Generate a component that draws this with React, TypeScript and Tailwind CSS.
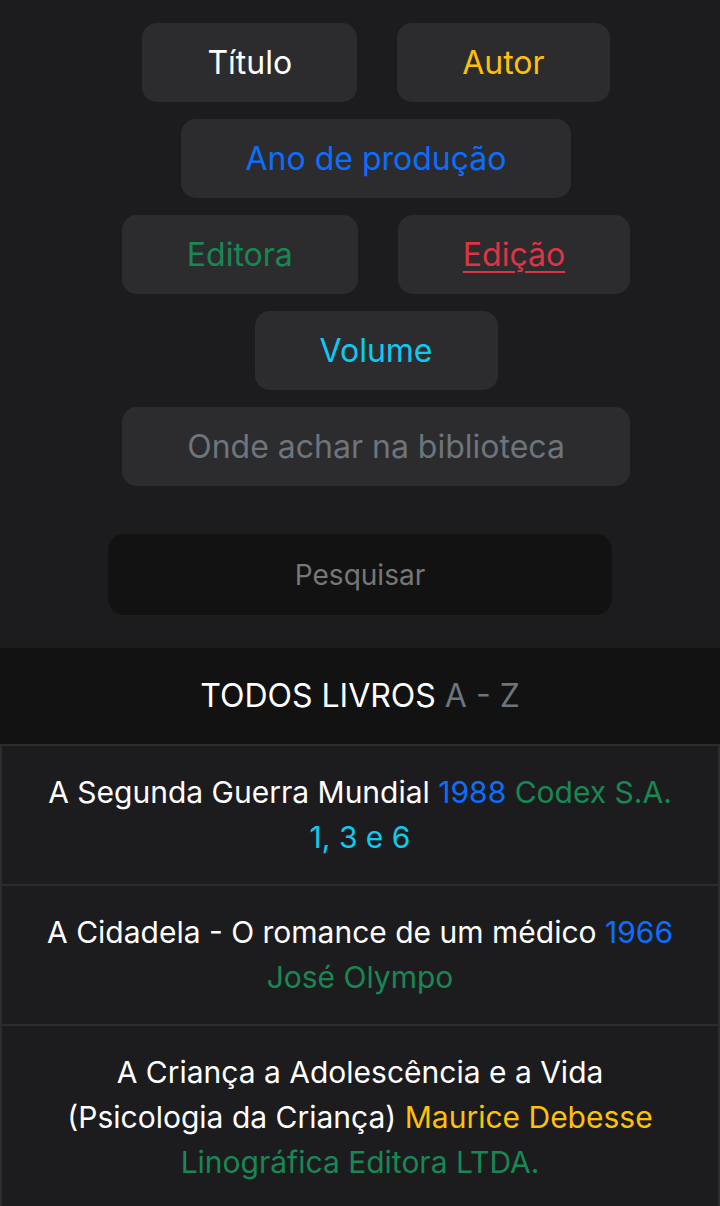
const font = { fontFamily: "Inter, 'Noto Sans', sans-serif" };

function Chip({ label, color, underline }: { label: string; color: string; underline?: boolean }) {
  return (
    <button
      className={`h-[79px] px-[65px] rounded-[15px] bg-[#2c2c2e] text-[32px] leading-none ${color} ${underline ? "underline underline-offset-[5px] decoration-2" : ""}`}
    >
      {label}
    </button>
  );
}

const books = [
  {
    title: "A Segunda Guerra Mundial",
    year: "1988",
    publisher: "Codex S.A.",
    volume: "1, 3 e 6",
  },
  {
    title: "A Cidadela - O romance de um médico",
    year: "1966",
    publisher: "José Olympo",
  },
  {
    title: "A Criança a Adolescência e a Vida (Psicologia da Criança)",
    author: "Maurice Debesse",
    publisher: "Linográfica Editora LTDA.",
  },
];

export default function App() {
  return (
    <div className="min-h-[1206px] bg-[#1c1c1e] text-white" style={font}>
      <div className="flex flex-col items-center gap-[17px] pt-[23px] pl-[32px]">
        <div className="flex gap-[40px]">
          <Chip label="Título" color="text-white" />
          <Chip label="Autor" color="text-[#ffc107]" />
        </div>
        <Chip label="Ano de produção" color="text-[#0d6efd]" />
        <div className="flex gap-[40px]">
          <Chip label="Editora" color="text-[#198754]" />
          <Chip label="Edição" color="text-[#dc3545]" underline />
        </div>
        <Chip label="Volume" color="text-[#0dcaf0]" />
        <Chip label="Onde achar na biblioteca" color="text-[#6c757d]" />
      </div>

      <div className="flex justify-center pt-[48px] pb-[33px]">
        <button className="w-[504px] h-[81px] rounded-[16px] bg-[#121212] text-[28px] text-[#777777]">
          Pesquisar
        </button>
      </div>

      <div className="h-[96px] bg-[#121212] flex items-center justify-center text-[32px]">
        <span>TODOS LIVROS</span>
        <span className="text-[#6c757d] ml-[9px]">A - Z</span>
      </div>

      <div>
        {books.map((b, i) => (
          <div
            key={i}
            className={`border-2 border-[#2c2c2e] ${i > 0 ? "border-t-0" : ""} px-[40px] py-[24px] text-center text-[30px] leading-[45px]`}
          >
            {b.title}
            {b.year && <span className="text-[#0d6efd]"> {b.year}</span>}
            {b.author && <span className="text-[#ffc107]"> {b.author}</span>}
            {b.publisher && <span className="text-[#198754]"> {b.publisher}</span>}
            {b.volume && <span className="text-[#0dcaf0]"> {b.volume}</span>}
          </div>
        ))}
      </div>
    </div>
  );
}
